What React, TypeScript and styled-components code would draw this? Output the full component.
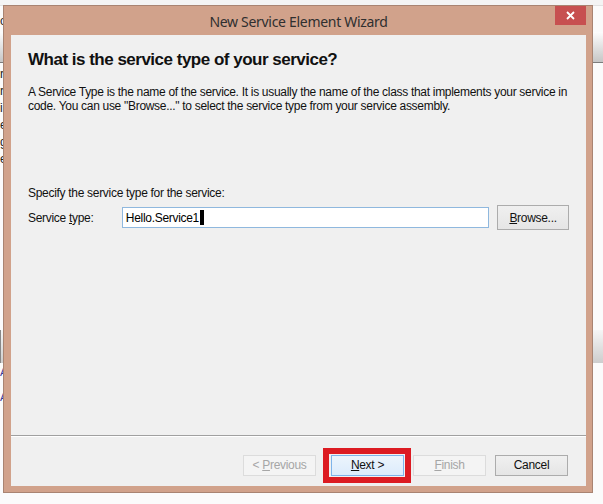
import styled, { createGlobalStyle } from "styled-components"

const GlobalStyle = createGlobalStyle`
    html, body {
        margin: 0;
        padding: 0;
        overflow: hidden;
        background: #fbfbfb;
    }
`

const Desktop = styled.div`
    position: relative;
    width: 603px;
    height: 504px;
    overflow: hidden;
    background: #fbfbfb;
    font-family: "Liberation Sans", Arial, sans-serif;
`

/* the application window lying behind the wizard */
const BackApp = styled.div`
    display: flex;
    flex-direction: column;
    height: 100%;
    font-size: 12px;
    color: #222;
`
const BackTopStrip = styled.div`
    height: 5px;
    background: #f4f4f4;
    border-bottom: 1px solid #e2e2e2;
`
const BackTab = styled.div`
    margin-top: 8px;
    line-height: 14px;
`
const BackToolbar = styled.div`
    height: 30px;
    margin-top: 4px;
    background: linear-gradient(#fdfdfd, #c6c6c6);
    border-bottom: 1px solid #7c7c7c;
`
const BackLines = styled.div`
    display: flex;
    flex-direction: column;
    gap: 3px;
    padding-top: 4px;
    line-height: 14px;
`
const BackPanel = styled.div`
    margin-top: 164px;
    height: 33px;
    border-left: 1px solid #888;
    background: linear-gradient(#f6f6f6, #cdcdcd);
`
const BackLinks = styled.div`
    display: flex;
    flex-direction: column;
    gap: 7px;
    color: #33339a;
    font-size: 11px;
    line-height: 18px;
`

const Window = styled.div`
    position: absolute;
    left: 3px;
    top: 5px;
    width: 590px;
    height: 488px;
    box-sizing: border-box;
    background: #d1a28b;
    border: 1px solid #a98472;
    display: flex;
    flex-direction: column;
    padding: 0 6px 6px 7px;
`
const TitleBar = styled.div`
    position: relative;
    height: 29px;
    display: flex;
    align-items: center;
    justify-content: center;
    flex-shrink: 0;
`
const Title = styled.div`
    font-family: "Noto Sans", "Liberation Sans", sans-serif;
    font-size: 14px;
    letter-spacing: -0.3px;
    color: #2f2f2f;
    padding-top: 1px;
`
const CloseButton = styled.div`
    position: absolute;
    right: 0;
    top: 0;
    width: 31px;
    height: 19px;
    background: #c75050;
    display: flex;
    align-items: center;
    justify-content: center;
`

const Client = styled.div`
    flex: 1;
    background: #f0f0f0;
    display: flex;
    flex-direction: column;
    font-size: 12px;
    letter-spacing: -0.3px;
    color: #111;
`
const Page = styled.div`
    flex: 1;
    padding: 14px 17px 0;
    display: flex;
    flex-direction: column;
`
const Heading = styled.h1`
    margin: 0;
    font-size: 17px;
    letter-spacing: -0.5px;
    font-weight: bold;
    color: #111;
    line-height: 22px;
`
const Description = styled.p`
    margin: 14px 0 0;
    line-height: 14px;
    white-space: nowrap;
`
const Prompt = styled.div`
    margin-top: 73px;
    line-height: 14px;
`
const FieldRow = styled.div`
    display: flex;
    align-items: center;
    margin-top: 5px;
`
const FieldLabel = styled.div`
    width: 94px;
`
const TextBox = styled.div`
    width: 368px;
    height: 21px;
    box-sizing: border-box;
    border: 1px solid #8fb8de;
    background: #fff;
    display: flex;
    align-items: center;
    padding-left: 3px;
    color: #000;
`
const Caret = styled.span`
    display: inline-block;
    width: 4px;
    height: 15px;
    background: #000;
    margin-left: 1px;
`
const Key = styled.span`
    text-decoration: underline;
`

const Footer = styled.div`
    height: 51px;
    box-sizing: border-box;
    border-top: 1px solid #a0a0a0;
    box-shadow: inset 0 1px 0 #fff;
    display: flex;
    justify-content: flex-end;
    align-items: center;
    padding: 8px 18px 0 0;
    gap: 9px;
`
const NavPair = styled.div`
    display: flex;
    gap: 15px;
`
const Button = styled.div<{ $disabled?: boolean; $focused?: boolean; $tall?: boolean }>`
    width: 73px;
    height: ${p => (p.$tall ? 25 : 21)}px;
    box-sizing: border-box;
    display: flex;
    align-items: center;
    justify-content: center;
    color: ${p => (p.$disabled ? "#a6a6a6" : "#111")};
    border: 1px solid ${p => (p.$disabled ? "#dcdcdc" : p.$focused ? "#7eb4ea" : "#acacac")};
    background: ${p =>
        p.$disabled
            ? "#f4f4f4"
            : p.$focused
            ? "linear-gradient(#ecf4fc, #dcecfc)"
            : "linear-gradient(#f0f0f0, #e5e5e5)"};
`
const BrowseButton = styled(Button)`
    margin-left: 8px;
    width: 72px;
`
/* red annotation frame drawn over the Next button */
const Marked = styled.div`
    position: relative;
    &::after {
        content: "";
        position: absolute;
        left: -8px;
        right: -7px;
        top: -7px;
        bottom: -7px;
        border: 6px solid #dc1b22;
        pointer-events: none;
    }
`

const App: React.FC = () => {
    return (
        <Desktop>
            <GlobalStyle />
            <BackApp>
                <BackTopStrip />
                <BackTab>o</BackTab>
                <BackToolbar />
                <BackLines>
                    <div>ri</div>
                    <div>r</div>
                    <div>i</div>
                    <div>e</div>
                    <div>g</div>
                    <div>e</div>
                </BackLines>
                <BackPanel />
                <BackLinks>
                    <div>Ac</div>
                    <div>Ac</div>
                </BackLinks>
            </BackApp>
            <Window>
                <TitleBar>
                    <Title>New Service Element Wizard</Title>
                    <CloseButton>
                        <svg width="9" height="9" viewBox="0 0 9 9">
                            <path d="M1 1L8 8M8 1L1 8" stroke="#fff" strokeWidth="1.8" />
                        </svg>
                    </CloseButton>
                </TitleBar>
                <Client>
                    <Page>
                        <Heading>What is the service type of your service?</Heading>
                        <Description>
                            A Service Type is the name of the service. It is usually the name of the class that
                            implements your service in
                            <br />
                            code. You can use "Browse..." to select the service type from your service assembly.
                        </Description>
                        <Prompt>Specify the service type for the service:</Prompt>
                        <FieldRow>
                            <FieldLabel>
                                Service <Key>t</Key>ype:
                            </FieldLabel>
                            <TextBox>
                                Hello.Service1
                                <Caret />
                            </TextBox>
                            <BrowseButton $tall>
                                <span>
                                    <Key>B</Key>rowse...
                                </span>
                            </BrowseButton>
                        </FieldRow>
                    </Page>
                    <Footer>
                        <NavPair>
                            <Button $disabled>
                                <span>
                                    &lt; <Key>P</Key>revious
                                </span>
                            </Button>
                            <Marked>
                                <Button $focused>
                                    <span>
                                        <Key>N</Key>ext &gt;
                                    </span>
                                </Button>
                            </Marked>
                        </NavPair>
                        <Button $disabled>
                            <span>
                                <Key>F</Key>inish
                            </span>
                        </Button>
                        <Button>Cancel</Button>
                    </Footer>
                </Client>
            </Window>
        </Desktop>
    )
}

export default App
